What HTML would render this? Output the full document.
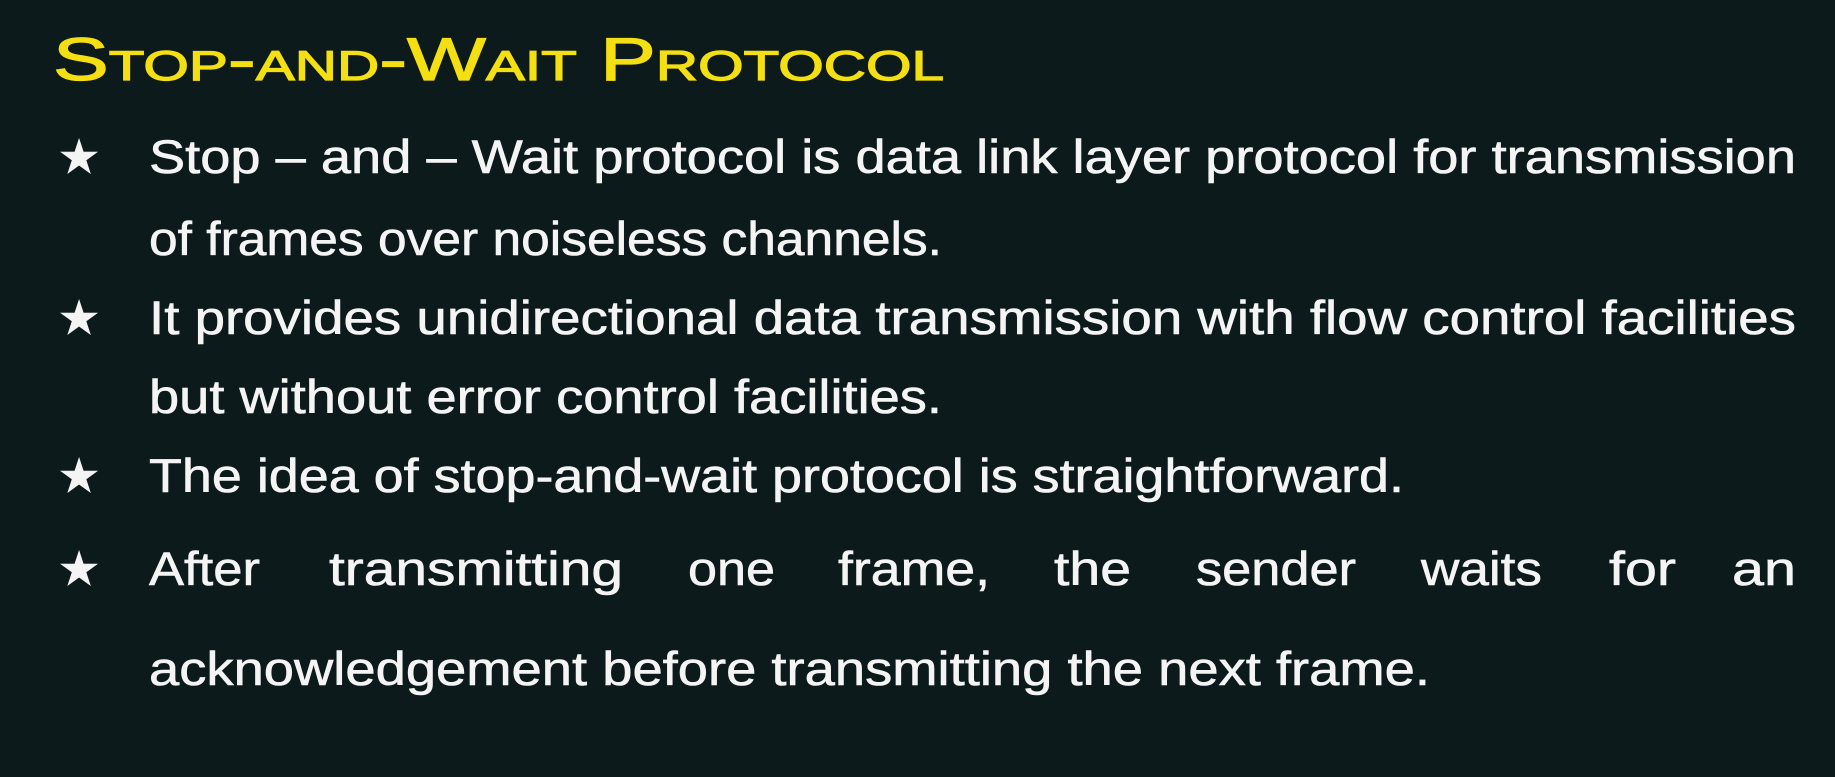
<!DOCTYPE html>
<html><head><meta charset="utf-8"><style>
html,body{margin:0;padding:0;background:#0c1a1b;}
svg{display:block}
</style></head><body>
<svg width="1835" height="777" xmlns="http://www.w3.org/2000/svg">
<rect width="1835" height="777" fill="#0c1a1b"/>
<text x="53" y="80" fill="#f3df12" stroke="#f3df12" stroke-width="1.2" font-family="Liberation Sans, sans-serif" font-size="60" style="font-variant:small-caps" textLength="891" lengthAdjust="spacingAndGlyphs">Stop-and-Wait Protocol</text>
<g fill="#f4f4f4" stroke="#f4f4f4" stroke-width="0.6" font-family="Liberation Sans, sans-serif" font-size="47">
<text x="58" y="173">★</text>
<text x="58" y="334">★</text>
<text x="58" y="492">★</text>
<text x="58" y="585">★</text>
<text x="149" y="173" textLength="1647" lengthAdjust="spacingAndGlyphs">Stop – and – Wait protocol is data link layer protocol for transmission</text>
<text x="149" y="255" textLength="793" lengthAdjust="spacingAndGlyphs">of frames over noiseless channels.</text>
<text x="149" y="334" textLength="1647" lengthAdjust="spacingAndGlyphs">It provides unidirectional data transmission with flow control facilities</text>
<text x="149" y="413" textLength="793" lengthAdjust="spacingAndGlyphs">but without error control facilities.</text>
<text x="149" y="492" textLength="1255" lengthAdjust="spacingAndGlyphs">The idea of stop-and-wait protocol is straightforward.</text>
<text x="149" y="585" textLength="111" lengthAdjust="spacingAndGlyphs">After</text>
<text x="329" y="585" textLength="294" lengthAdjust="spacingAndGlyphs">transmitting</text>
<text x="688" y="585" textLength="87" lengthAdjust="spacingAndGlyphs">one</text>
<text x="838" y="585" textLength="152" lengthAdjust="spacingAndGlyphs">frame,</text>
<text x="1054" y="585" textLength="77" lengthAdjust="spacingAndGlyphs">the</text>
<text x="1196" y="585" textLength="160" lengthAdjust="spacingAndGlyphs">sender</text>
<text x="1421" y="585" textLength="121" lengthAdjust="spacingAndGlyphs">waits</text>
<text x="1609" y="585" textLength="67" lengthAdjust="spacingAndGlyphs">for</text>
<text x="1732" y="585" textLength="64" lengthAdjust="spacingAndGlyphs">an</text>
<text x="149" y="685" textLength="1281" lengthAdjust="spacingAndGlyphs">acknowledgement before transmitting the next frame.</text>
</g>
</svg>
</body></html>
